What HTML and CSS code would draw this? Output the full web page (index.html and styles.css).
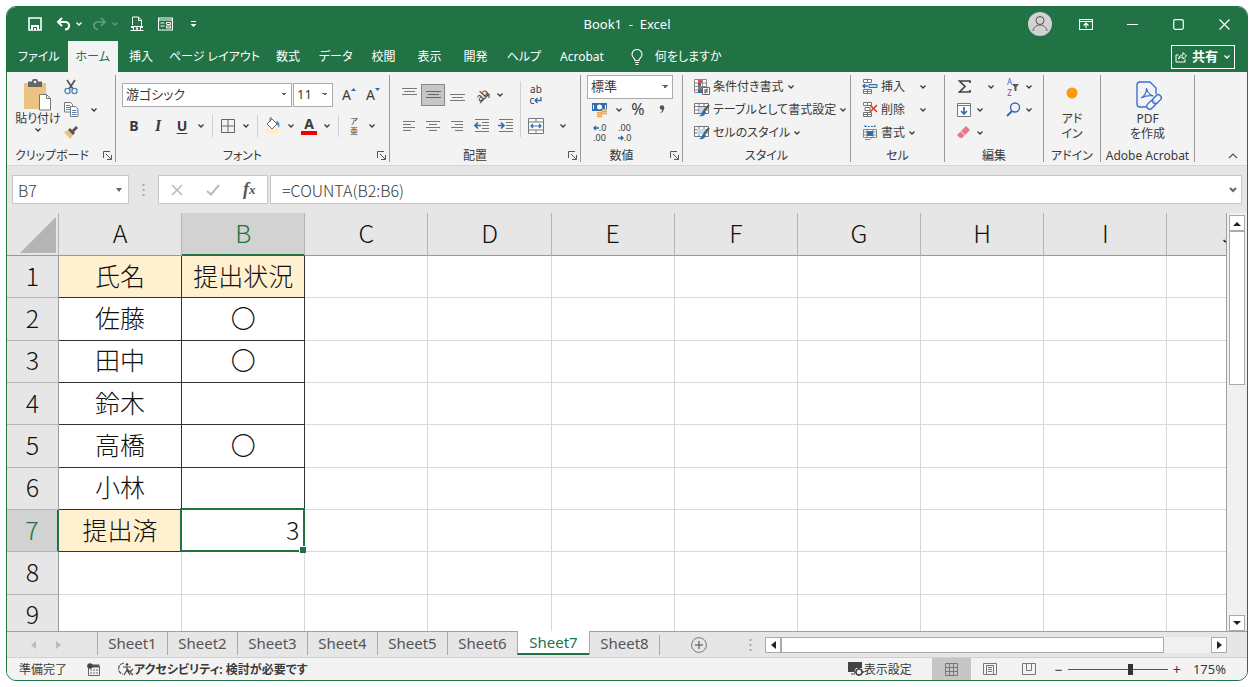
FILE: index.html
```html
<!DOCTYPE html>
<html lang="ja">
<head>
    <meta charset="UTF-8">
    <meta name="viewport" content="width=device-width, initial-scale=1.0">
    <title>Book1 - Excel</title>
    <link rel="stylesheet" href="styles.css">
</head>
<body>
    <svg class="defs" aria-hidden="true">
        <symbol id="chev" viewBox="0 0 8 8"><path d="M1.5 2.5 4 5 6.5 2.5" fill="none" stroke="currentColor" stroke-width="1.3"/></symbol>
        <symbol id="launch" viewBox="0 0 9 9"><path d="M.5 7V.5H7M3 3l5 5M8.5 4v4.5H4" fill="none" stroke="#555"/></symbol>
        <symbol id="minitable" viewBox="0 0 16 16"><path d="M.5 1.5h14v10H.5zM.5 4.5h14M.5 8h14M5 1.5v10M10 1.5v10" fill="#fff" stroke="#777"/></symbol>
    </svg>
    <div class="window">
        <header class="titlebar">
            <div class="quick">
                <button aria-label="上書き保存"><svg width="14" height="14" viewBox="0 0 14 14"><path d="M1 1h12v12H1z" fill="none" stroke="#fff" stroke-width="1.6"/><path d="M3 8h8v5H3z" fill="#fff"/><path d="M5 10h4v3H8v-2H6v2H5z" fill="#217346"/></svg></button>
                <button aria-label="元に戻す"><svg width="15" height="14" viewBox="0 0 15 14"><path d="M6 1 2 5l4 4M2 5h7c6 0 5 7 0 7.5" fill="none" stroke="#fff" stroke-width="2"/></svg></button>
                <svg class="chev" width="8" height="8"><use href="#chev"/></svg>
                <button class="dim" aria-label="やり直し"><svg width="15" height="14" viewBox="0 0 15 14"><path d="M9 1l4 4-4 4M13 5H6C0 5 1 12 6 12.5" fill="none" stroke="#fff" stroke-width="1.7"/></svg></button>
                <svg class="chev dim" width="8" height="8"><use href="#chev"/></svg>
                <button class="gap" aria-label="印刷プレビュー"><svg width="14" height="16" viewBox="0 0 14 16"><path d="M2.5 9V1h6l3 3v6M8.500 1v3.500h3" fill="none" stroke="#fff"/><path d="M1 10h12v2H1z" fill="#fff"/><path d="M3.500 10.500h7v4h-7z" fill="#217346" stroke="#fff"/><circle cx="7" cy="12.500" r="1.200" fill="#fff"/><path d="M.5 14.500h13" stroke="#fff"/></svg></button>
                <button class="gap" aria-label="フォーム"><svg width="15" height="14" viewBox="0 0 15 14"><path d="M.5 1h14v12H.5zM.5 3h14M2.500 6h4M2.500 9h4" fill="none" stroke="#fff" stroke-width="1.2"/><path d="M8.500 5.500h4v2h-4zM8.500 9h4v2h-4z" fill="none" stroke="#fff"/></svg></button>
                <button class="gap" aria-label="カスタマイズ"><svg width="7" height="8" viewBox="0 0 7 8"><path d="M1 1.500h5" stroke="#fff"/><path d="M.5 4h6l-3 3z" fill="#fff"/></svg></button>
            </div>
            <div class="title">Book1&nbsp; -&nbsp; Excel</div>
            <div class="controls">
                <button class="avatar" aria-label="アカウント"><svg width="24" height="24" viewBox="0 0 24 24"><circle cx="12" cy="12" r="12" fill="#d2d2d2"/><circle cx="12" cy="8.5" r="4" fill="none" stroke="#555"/><path d="M5 19c1-8 13-8 14 0" fill="none" stroke="#555"/></svg></button>
                <button aria-label="リボンの表示オプション"><svg width="14" height="11" viewBox="0 0 14 11"><path d="M.5.5h13v10H.5zM.5 2.500h13M7 9V4.500M4.500 6.500 7 4l2.500 2.500" fill="none" stroke="#fff" stroke-width="1.2"/></svg></button>
                <button aria-label="最小化"><svg width="11" height="11" viewBox="0 0 11 11"><path d="M0 5.500h11" stroke="#fff" stroke-width="1.2"/></svg></button>
                <button aria-label="最大化"><svg width="11" height="11" viewBox="0 0 11 11"><rect x=".7" y=".7" width="9.6" height="9.6" rx="1.5" fill="none" stroke="#fff" stroke-width="1.2"/></svg></button>
                <button aria-label="閉じる"><svg width="11" height="11" viewBox="0 0 11 11"><path d="M.5.5l10 10M10.500.5l-10 10" stroke="#fff" stroke-width="1.2"/></svg></button>
            </div>
        </header>

        <nav class="menu">
            <button class="kana">ファイル</button>
            <button class="kana active">ホーム</button>
            <button>挿入</button>
            <button class="long">ページ レイアウト</button>
            <button>数式</button>
            <button class="kana">データ</button>
            <button>校閲</button>
            <button>表示</button>
            <button>開発</button>
            <button class="kana">ヘルプ</button>
            <button>Acrobat</button>
            <button class="tell"><svg width="12" height="16" viewBox="0 0 12 16"><path d="M4 11.500C4 9 1 8.500 1 5.500a5 5 0 0 1 10 0c0 3-3 3.500-3 6zM4 13.500h4M4.500 15.500h3" fill="none" stroke="#fff" stroke-width="1.1"/></svg>何をしますか</button>
            <button class="share"><svg width="12" height="12" viewBox="0 0 12 12"><path d="M3.500 4H1v7h9V8M3.500 8C4 5 6 4 8 4V1.500L11.500 5 8 8V6C6 6 4.500 6.500 3.500 8z" fill="none" stroke="#fff"/></svg><b>共有</b><svg width="8" height="8"><use href="#chev"/></svg></button>
        </nav>

        <section class="ribbon">
            <div class="group clipboard">
                <div class="body">
                    <button class="big"><svg width="30" height="32" viewBox="0 0 30 32"><path d="M1 4h22v26H1z" fill="#eac282"/><path d="M5 2.500h4a3 3 0 0 1 6 0h4V8H5z" fill="#666"/><circle cx="12" cy="3" r="1.3" fill="#f3f3f3"/><path d="M16.500 15.500h7l4 4V31h-11z" fill="#fff" stroke="#777"/><path d="M23.500 15.500v4h4" fill="none" stroke="#777"/></svg>貼り付け<svg width="8" height="8"><use href="#chev"/></svg></button>
                    <div class="rows">
                        <div class="row"><button class="ib" aria-label="切り取り"><svg width="14" height="16" viewBox="0 0 14 16"><path d="M3 1l6 9M11 1 5 10" stroke="#555" stroke-width="1.7"/><circle cx="3.5" cy="12" r="2.6" fill="none" stroke="#4f81bd" stroke-width="1.3"/><circle cx="10.5" cy="12" r="2.6" fill="none" stroke="#4f81bd" stroke-width="1.3"/></svg></button></div>
                        <div class="row"><button class="ib" aria-label="コピー"><svg width="15" height="15" viewBox="0 0 15 15"><path d="M.5.5h6L8.500 2.500V10H.5z" fill="#fff" stroke="#777"/><path d="M2 3.500h4M2 5.500h4M2 7.500h4" stroke="#4f81bd"/><path d="M6.500 4.500h5l2.500 2.500v7.500H6.500z" fill="#fff" stroke="#777"/><path d="M8 8.500h4.500M8 10.500h4.500M8 12.500h4.500" stroke="#4f81bd"/></svg></button><svg class="far" width="8" height="8"><use href="#chev"/></svg></div>
                        <div class="row"><button class="ib" aria-label="書式のコピー"><svg width="14" height="13" viewBox="0 0 14 13"><path d="M0 6l4-2 5 5-3 4z" fill="#eac282"/><path d="M4 4l2-2 5 5-2 2zM8 4l4-4 2 2-4 4z" fill="#555"/></svg></button></div>
                    </div>
                </div>
                <div class="label">クリップボード<button aria-label="クリップボードの詳細"><svg width="9" height="9"><use href="#launch"/></svg></button></div>
            </div>

            <div class="group font">
                <div class="body two">
                    <div class="row">
                        <select class="family" aria-label="フォント名"><option>游ゴシック</option></select>
                        <select class="size" aria-label="フォント サイズ"><option>11</option></select>
                        <button class="ib" aria-label="拡大"><span class="grow">A</span><svg width="5" height="14" viewBox="0 0 5 14"><path d="M0 3 2.500 0 5 3z" fill="#2b6cb0"/></svg></button>
                        <button class="ib" aria-label="縮小"><span class="grow">A</span><svg width="5" height="14" viewBox="0 0 5 14"><path d="M0 0h5L2.500 3z" fill="#2b6cb0"/></svg></button>
                    </div>
                    <div class="row">
                        <button class="ib"><b>B</b></button>
                        <button class="ib"><b class="ital">I</b></button>
                        <button class="ib"><b class="und">U</b></button>
                        <svg class="cv" width="8" height="8"><use href="#chev"/></svg>
                        <i class="sep"></i>
                        <button class="ib" aria-label="罫線"><svg width="14" height="14" viewBox="0 0 14 14"><path d="M.5.5h13v13H.5zM7 .5v13M.5 7h13" fill="none" stroke="#666"/></svg></button>
                        <svg class="cv" width="8" height="8"><use href="#chev"/></svg>
                        <i class="sep"></i>
                        <button class="ib" aria-label="塗りつぶし"><svg width="16" height="17" viewBox="0 0 16 17"><path d="M1 12h13v4H1z" fill="#fdeeb8"/><path d="M2 7l5-5 5 5-5 5zM5 5V1h2" fill="#fff" stroke="#666"/><path d="M11 4c3 0 4 3 3 7l-2-4z" fill="#4f81bd"/></svg></button>
                        <svg class="cv" width="8" height="8"><use href="#chev"/></svg>
                        <button class="ib fc"><b>A</b></button>
                        <svg class="cv" width="8" height="8"><use href="#chev"/></svg>
                        <i class="sep"></i>
                        <button class="ib ruby"><span>ア</span><span>亜</span></button>
                        <svg class="cv" width="8" height="8"><use href="#chev"/></svg>
                    </div>
                </div>
                <div class="label">フォント<button aria-label="フォントの詳細"><svg width="9" height="9"><use href="#launch"/></svg></button></div>
            </div>

            <div class="group align">
                <div class="body">
                    <div class="two">
                        <div class="row">
                            <button class="ib" aria-label="上揃え"><svg width="15" height="16" viewBox="0 0 15 16"><path d="M0 1.500h15M2 4.500h11M0 7.500h15" stroke="#777"/></svg></button>
                            <button class="ib on" aria-label="上下中央揃え"><svg width="15" height="16" viewBox="0 0 15 16"><path d="M0 4.500h15M2 7.500h11M0 10.500h15" stroke="#666"/></svg></button>
                            <button class="ib" aria-label="下揃え"><svg width="15" height="16" viewBox="0 0 15 16"><path d="M0 7.500h15M2 10.500h11M0 13.500h15" stroke="#777"/></svg></button>
                            <button class="ib orient" aria-label="方向"><span>ab</span><svg width="15" height="15" viewBox="0 0 15 15"><path d="M4 14 13 5M9 5h4v4" fill="none" stroke="#555" stroke-width="1.2"/></svg></button>
                            <svg class="cv" width="8" height="8"><use href="#chev"/></svg>
                        </div>
                        <div class="row">
                            <button class="ib" aria-label="左揃え"><svg width="12" height="10" viewBox="0 0 12 10"><path d="M0 .5h12M0 3.500h8M0 6.500h12M0 9.500h8" stroke="#777"/></svg></button>
                            <button class="ib" aria-label="中央揃え"><svg width="14" height="10" viewBox="0 0 14 10"><path d="M0 .5h14M3 3.500h8M0 6.500h14M3 9.500h8" stroke="#777"/></svg></button>
                            <button class="ib" aria-label="右揃え"><svg width="12" height="10" viewBox="0 0 12 10"><path d="M0 .5h12M4 3.500h8M0 6.500h12M4 9.500h8" stroke="#777"/></svg></button>
                            <button class="ib" aria-label="インデントを減らす"><svg width="15" height="13" viewBox="0 0 15 13"><path d="M1 .5h14M8 3.500h7M8 6.500h7M8 9.500h7M1 12.500h14" stroke="#777"/><path d="M7 6.500H1M4 3.500l-3 3 3 3" fill="none" stroke="#2b6cb0" stroke-width="1.7"/></svg></button>
                            <button class="ib" aria-label="インデントを増やす"><svg width="15" height="13" viewBox="0 0 15 13"><path d="M1 .5h14M8 3.500h7M8 6.500h7M8 9.500h7M1 12.500h14" stroke="#777"/><path d="M0 6.500h6M3 3.500l3 3-3 3" fill="none" stroke="#2b6cb0" stroke-width="1.7"/></svg></button>
                        </div>
                    </div>
                    <i class="sep tall"></i>
                    <div class="two">
                        <div class="row"><button class="ib wrap" aria-label="折り返して全体を表示する"><span>ab</span><span>c<svg width="8" height="7" viewBox="0 0 8 7"><path d="M7 0v3.500H1M3.500 1 1 3.500 3.500 6" fill="none" stroke="#2b6cb0" stroke-width="1.3"/></svg></span></button></div>
                        <div class="row"><button class="ib" aria-label="セルを結合して中央揃え"><svg width="16" height="16" viewBox="0 0 16 16"><path d="M.5.5h15v15H.5zM.5 4h15M.5 12h15M8 .5V4M8 12v3.500" fill="#fff" stroke="#777"/><path d="M3 8h10M5 6 3 8l2 2M11 6l2 2-2 2" fill="none" stroke="#2b6cb0" stroke-width="1.2"/></svg></button><svg class="far" width="8" height="8"><use href="#chev"/></svg></div>
                    </div>
                </div>
                <div class="label">配置<button aria-label="配置の詳細"><svg width="9" height="9"><use href="#launch"/></svg></button></div>
            </div>

            <div class="group number">
                <div class="body three">
                    <div class="row"><select aria-label="数値の書式"><option>標準</option></select></div>
                    <div class="row">
                        <button class="ib" aria-label="通貨"><svg width="16" height="16" viewBox="0 0 16 16"><path d="M0 1h15v8H0z" fill="#2f6db5"/><circle cx="7.5" cy="5" r="2.5" fill="#fff"/><path d="M1.500 3v4M13.500 3v4" stroke="#fff"/><path d="M5 9h6v6H5zM10 7h5v7h-5z" fill="#f3f3f3"/><path d="M5 10.500h5M5 12.500h5M5 14.500h5M10 7.500h5M10 9.500h5M10 11.500h5" stroke="#eda43e" stroke-width="1.3"/></svg></button>
                        <svg class="cv" width="8" height="8"><use href="#chev"/></svg>
                        <button class="ib pct">%</button>
                        <button class="ib comma" aria-label="桁区切り"><svg width="6" height="9" viewBox="0 0 6 9"><circle cx="3" cy="2.5" r="2.3" fill="#555"/><path d="M5.300 2.500C5 6 3 8 1 8.500 3 6.500 3.500 5 3 3z" fill="#555"/></svg></button>
                    </div>
                    <div class="row">
                        <button class="ib dec"><span><svg width="6" height="6" viewBox="0 0 6 6"><path d="M6 3H1M3 1 1 3l2 2" fill="none" stroke="#2b6cb0" stroke-width="1.4"/></svg>.0</span><span>.00</span></button>
                        <button class="ib dec"><span>.00</span><span><svg width="6" height="6" viewBox="0 0 6 6"><path d="M0 3h5M3 1l2 2-2 2" fill="none" stroke="#2b6cb0" stroke-width="1.4"/></svg>.0</span></button>
                    </div>
                </div>
                <div class="label">数値<button aria-label="数値の詳細"><svg width="9" height="9"><use href="#launch"/></svg></button></div>
            </div>

            <div class="group style">
                <div class="body three">
                    <button class="row"><svg width="16" height="16" viewBox="0 0 16 16"><path d="M.5.5h12v13H.5zM.5 4h12M.5 7.500h12M.5 11h12M8.500.5v13" fill="#fff" stroke="#888"/><path d="M4 1h4v3H4zM4 8h4v3H4z" fill="#d9534f"/><path d="M4 4h3v3H4zM4 11h5v3H4z" fill="#2f6db5"/><path d="M8.500 8.500h7v7h-7z" fill="#fff" stroke="#666"/><path d="M10 11h4M10 13h4M13 9.500l-2 5" stroke="#555"/></svg>条件付き書式<svg width="8" height="8"><use href="#chev"/></svg></button>
                    <button class="row"><svg width="16" height="16" viewBox="0 0 16 16"><use href="#minitable"/><path d="M5 5h5v6H5z" fill="#c5d9ee"/><path d="M15 3 10 9" stroke="#555" stroke-width="2"/><path d="M10 8l2 2c-1 4-4 5-7 4 3-1 2-4 5-6z" fill="#2f6db5"/></svg>テーブルとして書式設定<svg width="8" height="8"><use href="#chev"/></svg></button>
                    <button class="row"><svg width="16" height="16" viewBox="0 0 16 16"><use href="#minitable"/><path d="M3 4h9v5H3z" fill="#c5d9ee"/><path d="M15 3 10 9" stroke="#555" stroke-width="2"/><path d="M10 8l2 2c-1 4-4 5-7 4 3-1 2-4 5-6z" fill="#2f6db5"/></svg>セルのスタイル<svg width="8" height="8"><use href="#chev"/></svg></button>
                </div>
                <div class="label">スタイル</div>
            </div>

            <div class="group cells">
                <div class="body three">
                    <button class="row"><svg width="16" height="16" viewBox="0 0 16 16"><path d="M1.500.5h8v3h-8zM5.500.5v3M1.500 10.500h8v4h-8zM5.500 10.500v4M1.500 12.500h8" fill="#fff" stroke="#777"/><path d="M7 5.500h8v3H7z" fill="#c5d9ee" stroke="#2f6db5"/><path d="M6 7H1M3 5 1 7l2 2" fill="none" stroke="#2f6db5" stroke-width="1.3"/></svg>挿入<svg class="far" width="8" height="8"><use href="#chev"/></svg></button>
                    <button class="row"><svg width="16" height="16" viewBox="0 0 16 16"><path d="M1.500.5h8v3h-8zM5.500.5v3M1.500 10.500h8v4h-8zM5.500 10.500v4M1.500 12.500h8M3 5.500h5v3H3z" fill="#fff" stroke="#777"/><path d="M8 3l7 7M15 3l-7 7" stroke="#d9412b" stroke-width="1.7"/></svg>削除<svg class="far" width="8" height="8"><use href="#chev"/></svg></button>
                    <button class="row"><svg width="16" height="16" viewBox="0 0 16 16"><path d="M3 1.500h10M3 0v3M13 0v3" stroke="#2f6db5" stroke-dasharray="2 1"/><path d="M1.500 4.500h13v8h-13zM1.500 7h13M1.500 10h13M5 4.500v8M11 4.500v8M3 14.500h5l2-2" fill="#fff" stroke="#888"/><path d="M5 6h6v5H5z" fill="#2f6db5"/></svg>書式<svg width="8" height="8"><use href="#chev"/></svg></button>
                </div>
                <div class="label">セル</div>
            </div>

            <div class="group edit">
                <div class="body">
                    <div class="three">
                        <div class="row"><button class="ib" aria-label="オート SUM"><svg width="13" height="13" viewBox="0 0 13 13"><path d="M12 3V1H1.500L7 6.500 1.500 12H12v-2" fill="none" stroke="#444" stroke-width="1.7"/></svg></button><svg class="far" width="8" height="8"><use href="#chev"/></svg></div>
                        <div class="row"><button class="ib" aria-label="フィル"><svg width="14" height="14" viewBox="0 0 14 14"><path d="M.5.5h13v13H.5zM.5 2.500h13" fill="#fff" stroke="#777"/><path d="M7 4v7M4 8l3 3 3-3" fill="none" stroke="#2f6db5" stroke-width="1.7"/></svg></button><svg class="cv" width="8" height="8"><use href="#chev"/></svg></div>
                        <div class="row"><button class="ib" aria-label="クリア"><svg width="14" height="13" viewBox="0 0 14 13"><path d="M9 0l4 4-5 5-4-4z" fill="#e8798c"/><path d="M3.500 5.500l4 4L5 12H3L0 9z" fill="#e8798c"/></svg></button><svg class="cv" width="8" height="8"><use href="#chev"/></svg></div>
                    </div>
                    <div class="three">
                        <div class="row"><button class="ib sort" aria-label="並べ替えとフィルター"><span class="az"><span class="a">A</span><span class="z">Z</span></span><svg width="7" height="8" viewBox="0 0 7 8"><path d="M0 1h7L4.500 4v4h-2V4z" fill="#555"/></svg></button><svg class="cv" width="8" height="8"><use href="#chev"/></svg></div>
                        <div class="row"><button class="ib" aria-label="検索と選択"><svg width="15" height="15" viewBox="0 0 15 15"><circle cx="9" cy="5.5" r="4.5" fill="none" stroke="#2f6db5" stroke-width="1.4"/><path d="M6 9l-5 5" stroke="#2f6db5" stroke-width="2"/></svg></button><svg class="cv" width="8" height="8"><use href="#chev"/></svg></div>
                    </div>
                </div>
                <div class="label">編集</div>
            </div>

            <div class="group addin">
                <div class="body"><button class="big"><svg width="30" height="32" viewBox="0 0 30 32"><circle cx="15" cy="14" r="5.5" fill="#ff9a0c"/></svg><span>アド</span><span>イン</span></button></div>
                <div class="label">アドイン</div>
            </div>

            <div class="group adobe">
                <div class="body"><button class="big"><svg width="30" height="32" viewBox="0 0 30 32"><path d="M13 28H7a3 3 0 0 1-3-3V6a3 3 0 0 1 3-3h10l6 6v6" fill="none" stroke="#3b6fd4" stroke-width="1.4"/><path d="M8 19c3-1 6-6 5.500-10 1 5 3 7 7 8-5-1-8 0-12.500 2z" fill="none" stroke="#3b6fd4" stroke-width="1.2"/><g fill="#f3f3f3" fill-opacity=".7" stroke="#3b6fd4" stroke-width="1.4" transform="rotate(-45 21 23)"><rect x="12" y="20" width="10" height="6" rx="3"/><rect x="20" y="20" width="10" height="6" rx="3"/></g></svg><span>PDF</span><span>を作成</span></button></div>
                <div class="label">Adobe Acrobat</div>
            </div>
            <button class="collapse" aria-label="リボンを折りたたむ"><svg width="10" height="6" viewBox="0 0 10 6"><path d="M1 5l4-4 4 4" fill="none" stroke="#555" stroke-width="1.2"/></svg></button>
        </section>

        <section class="formulabar">
            <div class="namebox"><input type="text" value="B7" aria-label="名前ボックス"><svg width="6" height="4" viewBox="0 0 6 4"><path d="M0 0h6L3 4z" fill="#666"/></svg></div>
            <svg class="grip" width="3" height="12" viewBox="0 0 3 12"><path d="M1.500 0v12" stroke="#aaa" stroke-width="2" stroke-dasharray="2 3"/></svg>
            <div class="fxbox">
                <button aria-label="キャンセル"><svg width="12" height="12" viewBox="0 0 12 12"><path d="M1 1l10 10M11 1 1 11" stroke="#bbb" stroke-width="1.6"/></svg></button>
                <button aria-label="入力"><svg width="14" height="12" viewBox="0 0 14 12"><path d="M1 7l4 3.500L13 1" fill="none" stroke="#bbb" stroke-width="2"/></svg></button>
                <button class="fx">f<small>x</small></button>
            </div>
            <div class="formula"><input type="text" value="=COUNTA(B2:B6)" aria-label="数式バー"><svg width="8" height="6" viewBox="0 0 8 6"><path d="M1 1l3 3 3-3" fill="none" stroke="#666" stroke-width="2"/></svg></div>
        </section>

        <main class="sheet">
            <div class="viewport">
                <table>
                    <thead>
                        <tr>
                            <th class="corner"><svg width="36" height="36" viewBox="0 0 36 36"><path d="M36 0v36H0z" fill="#b4b4b4"/></svg></th>
                            <th>A</th><th class="sel">B</th><th>C</th><th>D</th><th>E</th><th>F</th><th>G</th><th>H</th><th>I</th><th>J</th>
                        </tr>
                    </thead>
                    <tbody>
                        <tr><th>1</th><td class="box head">氏名</td><td class="box head">提出状況</td><td></td><td></td><td></td><td></td><td></td><td></td><td></td><td></td></tr>
                        <tr><th>2</th><td class="box">佐藤</td><td class="box">〇</td><td></td><td></td><td></td><td></td><td></td><td></td><td></td><td></td></tr>
                        <tr><th>3</th><td class="box">田中</td><td class="box">〇</td><td></td><td></td><td></td><td></td><td></td><td></td><td></td><td></td></tr>
                        <tr><th>4</th><td class="box">鈴木</td><td class="box"></td><td></td><td></td><td></td><td></td><td></td><td></td><td></td><td></td></tr>
                        <tr><th>5</th><td class="box">高橋</td><td class="box">〇</td><td></td><td></td><td></td><td></td><td></td><td></td><td></td><td></td></tr>
                        <tr><th>6</th><td class="box">小林</td><td class="box"></td><td></td><td></td><td></td><td></td><td></td><td></td><td></td><td></td></tr>
                        <tr><th class="sel">7</th><td class="box head">提出済</td><td class="box current">3</td><td></td><td></td><td></td><td></td><td></td><td></td><td></td><td></td></tr>
                        <tr><th>8</th><td></td><td></td><td></td><td></td><td></td><td></td><td></td><td></td><td></td><td></td></tr>
                        <tr><th>9</th><td></td><td></td><td></td><td></td><td></td><td></td><td></td><td></td><td></td><td></td></tr>
                    </tbody>
                </table>
            </div>
            <div class="vscroll">
                <button aria-label="上へ"><svg width="8" height="5" viewBox="0 0 8 5"><path d="M0 5l4-4 4 4z" fill="#222"/></svg></button>
                <div class="thumb"></div>
                <button class="end" aria-label="下へ"><svg width="8" height="5" viewBox="0 0 8 5"><path d="M0 0h8L4 4z" fill="#222"/></svg></button>
            </div>
        </main>

        <nav class="tabs">
            <div class="arrows">
                <button aria-label="前のシート"><svg width="5" height="8" viewBox="0 0 5 8"><path d="M5 0v8L0 4z" fill="#bbb"/></svg></button>
                <button aria-label="次のシート"><svg width="5" height="8" viewBox="0 0 5 8"><path d="M0 0v8l5-4z" fill="#bbb"/></svg></button>
            </div>
            <button class="tab">Sheet1</button>
            <button class="tab">Sheet2</button>
            <button class="tab">Sheet3</button>
            <button class="tab">Sheet4</button>
            <button class="tab">Sheet5</button>
            <button class="tab">Sheet6</button>
            <button class="tab active">Sheet7</button>
            <button class="tab">Sheet8</button>
            <button class="add" aria-label="新しいシート"><svg width="16" height="16" viewBox="0 0 16 16"><circle cx="8" cy="8" r="7.4" fill="none" stroke="#777"/><path d="M8 4v8M4 8h8" stroke="#777" stroke-width="1.5"/></svg></button>
            <svg class="grip" width="3" height="12" viewBox="0 0 3 12"><path d="M1.500 0v12" stroke="#aaa" stroke-width="2" stroke-dasharray="2 3"/></svg>
            <div class="hscroll">
                <button aria-label="左へ"><svg width="5" height="8" viewBox="0 0 5 8"><path d="M5 0v8L0 4z" fill="#222"/></svg></button>
                <div class="thumb"></div>
                <button class="end" aria-label="右へ"><svg width="5" height="8" viewBox="0 0 5 8"><path d="M0 0v8l5-4z" fill="#222"/></svg></button>
            </div>
        </nav>

        <footer class="status">
            <span>準備完了</span>
            <svg class="macro" width="13" height="13" viewBox="0 0 13 13"><path d="M1.500 3.500h11v9h-11zM3 7h2M6 7h2M9 7h2M3 10h2M6 10h2M9 10h2" fill="none" stroke="#666"/><path d="M4 1.500h8.500v3H4z" fill="#555"/><circle cx="3" cy="3" r="2.8" fill="#444"/></svg>
            <button class="access"><svg width="16" height="14" viewBox="0 0 16 14"><path d="M6 1C-1 2-1 11 5 12" fill="none" stroke="#555" stroke-width="1.2" stroke-dasharray="4 1"/><path d="M5 5h8M9 5v3l-3 5M9 8l3 5M9 7l6 6M15 7l-3 3" fill="none" stroke="#444" stroke-width="1.2"/><circle cx="9" cy="2.5" r="1.3" fill="#444"/></svg><b>アクセシビリティ: 検討が必要です</b></button>
            <button class="display"><svg width="16" height="14" viewBox="0 0 16 14"><path d="M0 0h14v6H8l-2 4H0z" fill="#444"/><circle cx="11" cy="10" r="3" fill="#f3f3f3" stroke="#444" stroke-width="1.6"/><path d="M11 5v2M11 13v1M6 10h2M14 10h2" stroke="#444" stroke-width="1.5"/><path d="M3 12h4" stroke="#444"/></svg>表示設定</button>
            <div class="views">
                <button class="on" aria-label="標準"><svg width="13" height="13" viewBox="0 0 13 13"><path d="M.5.5h12v12H.5zM.5 4.500h12M.5 8.500h12M4.500.5v12M8.500.5v12" fill="none" stroke="#777"/></svg></button>
                <button aria-label="ページ レイアウト"><svg width="14" height="12" viewBox="0 0 14 12"><path d="M.5.5h13v11H.5zM3.500 2.500h7v9h-7zM5 4.500h4M5 6.500h4M5 8.500h4" fill="none" stroke="#777"/></svg></button>
                <button aria-label="改ページ プレビュー"><svg width="14" height="12" viewBox="0 0 14 12"><path d="M.5.5h13v11H.5zM4.500.5v7h5v-7" fill="none" stroke="#777"/></svg></button>
            </div>
            <label class="zoom"><span>−</span><input type="range" min="10" max="220" value="142" aria-label="ズーム"><span>+</span></label>
            <span class="percent">175%</span>
        </footer>
    </div>
</body>
</html>
```
FILE: styles.css
```css
* {
    box-sizing: border-box;
}
body {
    margin: 0;
    padding: 6px 7px 7px 6px;
    background-color: #fff;
    color: #3a3a3a;
    font-family: "Noto Sans", "Noto Sans CJK JP", sans-serif;
    font-size: 12px;
    line-height: 15px;
    font-feature-settings: "palt";
}
button, input, select {
    margin: 0;
    padding: 0;
    border: 0;
    background: none;
    color: inherit;
    font: inherit;
    font-feature-settings: inherit;
}
button {
    display: flex;
    align-items: center;
    justify-content: center;
    white-space: nowrap;
}
svg {
    flex: none;
}
.defs {
    position: absolute;
    width: 0;
    height: 0;
}
.window {
    border: 1px solid #217346;
    border-radius: 10px;
    overflow: hidden;
    background-color: #e6e6e6;
}

/* title bar */
.titlebar {
    display: grid;
    grid-template-columns: 1fr auto 1fr;
    align-items: center;
    height: 34px;
    background-color: #217346;
    color: #fff;
}
.quick {
    display: flex;
    align-items: center;
    padding-left: 20px;
    gap: 4px;
}
.quick button {
    width: 16px;
    height: 20px;
}
.quick button + button, .quick .gap {
    margin-left: 8px;
}
.quick .chev + .dim {
    margin-left: 4px;
}
.quick .chev + .gap {
    margin-left: 6px;
}
.dim {
    opacity: 0.3;
}
.title {
    font-size: 13px;
}
.controls {
    display: flex;
    justify-content: flex-end;
}
.controls button {
    width: 46px;
    height: 30px;
}

/* menu */
.menu {
    display: flex;
    height: 31px;
    padding-left: 3px;
    background-color: #217346;
    color: #fff;
}
.menu button {
    padding: 0 11px;
}
.menu .kana {
    padding: 0 8px;
}
.menu .long {
    padding: 0 5px;
}
.menu .active {
    background-color: #f3f3f3;
    color: #217346;
}
.menu .tell {
    gap: 12px;
    padding-left: 16px;
}
.menu .share {
    align-self: center;
    gap: 5px;
    height: 24px;
    margin-left: auto;
    margin-right: 12px;
    padding: 0 3px;
    border: 1px solid #fff;
    font-size: 13px;
}

/* ribbon */
.ribbon {
    display: flex;
    height: 94px;
    padding: 3px 0;
    background-color: #f3f3f3;
    border-bottom: 1px solid #d6d6d6;
}
.group {
    display: flex;
    flex-direction: column;
    border-right: 1px solid #999;
}
.clipboard { width: 109px; }
.font { width: 274px; }
.align { width: 191px; }
.number { width: 102px; }
.style { width: 168px; }
.cells { width: 94px; }
.edit { width: 99px; }
.addin { width: 57px; }
.adobe { width: 94px; }
.body {
    display: flex;
    flex: 1;
}
.label {
    position: relative;
    height: 14px;
    line-height: 16px;
    text-align: center;
    white-space: nowrap;
}
.label button {
    position: absolute;
    right: 3px;
    top: 3px;
}
.clipboard .label {
    padding-right: 18px;
}
.font .label, .align .label, .number .label {
    padding-right: 20px;
}
.row {
    display: flex;
    align-items: center;
    justify-content: flex-start;
    height: 23px;
}
.two {
    padding-top: 4px;
}
.two .row {
    height: 31px;
}
.body.two, .body.three {
    flex-direction: column;
}
.ib {
    width: 24px;
    height: 22px;
    font-size: 14px;
}
.cv {
    margin: 0 3px;
}
.far {
    margin-left: 11px;
}
.sep {
    width: 1px;
    height: 22px;
    margin: 0 4px;
    background-color: #d0d0d0;
}
.sep ~ .ib {
    width: 22px;
}
.big {
    flex-direction: column;
    justify-content: flex-start;
    width: 100%;
    padding-top: 4px;
}
.clipboard .big {
    width: 50px;
    margin-left: 6px;
}
.clipboard .ib {
    width: 16px;
}
select {
    height: 24px;
    padding-left: 3px;
    border: 1px solid #ababab;
    background-color: #fff;
    background-image: linear-gradient(45deg, transparent 50%, #666 50%), linear-gradient(-45deg, transparent 50%, #666 50%);
    background-position: right 7px center, right 4px center;
    background-size: 3px 3px;
    background-repeat: no-repeat;
    appearance: none;
    font-size: 13px;
}
.font .body {
    padding-left: 6px;
}
.family { width: 170px; }
.size {
    width: 40px;
    margin: 0 4px 0 1px;
}
.grow {
    font-size: 14px;
}
.ital {
    font-family: "Liberation Serif", serif;
    font-style: italic;
    font-size: 16px;
}
.und {
    text-decoration: underline;
    text-underline-offset: 2px;
}
.fc b {
    width: 16px;
    border-bottom: 4px solid #f00000;
    line-height: 14px;
}
.ruby, .wrap, .dec {
    flex-direction: column;
}
.ruby span {
    font-size: 8px;
    line-height: 10px;
}
.align .body {
    padding-left: 7px;
}
.align .two:first-child {
    width: 120px;
}
.on {
    background-color: #c6c6c6;
}
.ib.on {
    border: 1px solid #888;
}
.tall {
    height: 56px;
    margin: 6px 3px 0;
}
.orient {
    position: relative;
}
.orient span {
    transform: rotate(-45deg);
    font-size: 11px;
}
.orient svg {
    position: absolute;
    left: 7px;
    top: 5px;
}
.wrap span {
    font-size: 10px;
    line-height: 11px;
}
.number .body {
    padding-left: 6px;
}
.number select {
    width: 86px;
}
.pct {
    font-size: 16px;
}
.dec span {
    font-size: 9px;
    line-height: 10px;
}
.number .row:last-child .ib, .number .row .ib:first-child {
    width: 25px;
}
.style .body, .cells .body {
    padding-left: 11px;
}
.style .row, .cells .row {
    gap: 3px;
}
.edit .body {
    gap: 14px;
    padding-left: 7px;
}
.edit .three + .three {
    margin-left: -8px;
}
.edit .cv {
    margin: 0;
}
.az {
    display: flex;
    flex-direction: column;
    font-size: 8px;
    line-height: 11px;
}
.a { color: #2f6db5; }
.z { color: #8e44ad; }
.collapse {
    align-self: flex-end;
    width: 12px;
    height: 12px;
    margin-left: auto;
    margin-right: 8px;
}

/* formula bar */
.formulabar {
    display: flex;
    align-items: center;
    height: 47px;
    padding: 0 5px;
}
.namebox, .fxbox, .formula {
    display: flex;
    align-items: center;
    height: 29px;
    border: 1px solid #c8c8c8;
    background-color: #fff;
}
.formulabar input {
    flex: 1;
    width: 100%;
    min-width: 0;
    font-family: "Noto Sans CJK JP", sans-serif;
    font-weight: 300;
    font-size: 16px;
}
.namebox {
    width: 117px;
    padding: 0 6px 0 5px;
}
.formulabar .grip {
    margin: 0 13px;
}
.fxbox {
    justify-content: space-around;
    width: 110px;
}
.fx {
    font-family: "Liberation Serif", serif;
    font-style: italic;
    font-weight: bold;
    font-size: 18px;
    color: #555;
}
.fx small {
    font-size: 13px;
}
.formula {
    flex: 1;
    margin-left: 2px;
    padding: 0 4px 0 11px;
}

/* worksheet */
.sheet {
    display: flex;
    height: 419px;
    border-bottom: 1px solid #a0a0a0;
}
.viewport {
    flex: 1;
    overflow: hidden;
    border-right: 1px solid #a0a0a0;
}
table {
    width: 105.3%;
    height: 424px;
    table-layout: fixed;
    border-collapse: separate;
    border-spacing: 0;
    font-family: "Noto Sans CJK JP", sans-serif;
    font-weight: 300;
    font-size: 25px;
    line-height: 36px;
    color: #111;
}
th, td {
    padding: 0 0 4px;
    border-right: 1px solid #d9d9d9;
    border-bottom: 1px solid #d9d9d9;
    background-color: #fff;
    text-align: center;
}
th {
    border-right-color: #b5b5b5;
    border-bottom-color: #b5b5b5;
    background-color: #e6e6e6;
    font-weight: 300;
}
thead th {
    height: 43px;
    border-bottom-color: #9a9a9a;
}
tbody th {
    border-right-color: #9a9a9a;
}
.corner {
    width: 52px;
    padding: 2px 2px 0 0;
    text-align: right;
    line-height: 0;
}
.sel {
    background-color: #d2d2d2;
    color: #217346;
}
thead .sel {
    border-bottom: 2px solid #217346;
}
tbody .sel {
    border-right: 2px solid #217346;
}
.box {
    border-color: #333;
}
.head {
    background-color: #fff0cf;
}
.current {
    position: relative;
    padding-right: 5px;
    text-align: right;
}
.current::before {
    content: "";
    position: absolute;
    inset: -2px -1px -1px -2px;
    border: 2px solid #217346;
}
.current::after {
    content: "";
    position: absolute;
    right: -2px;
    bottom: -2px;
    width: 6px;
    height: 6px;
    border: 1px solid #fff;
    border-width: 1px 0 0 1px;
    background-color: #217346;
}
.vscroll {
    display: flex;
    flex-direction: column;
    width: 20px;
    padding: 2px 2px 0;
    background-color: #f0f0f0;
}
.vscroll button, .hscroll button {
    width: 16px;
    height: 16px;
    border: 1px solid #aaa;
    background-color: #fff;
}
.thumb {
    border: 1px solid #aaa;
    background-color: #fff;
}
.vscroll .thumb {
    height: 37%;
}
.vscroll .end {
    margin-top: auto;
}

/* sheet tabs */
.tabs {
    display: flex;
    align-items: center;
    height: 26px;
    padding-right: 20px;
    border-bottom: 1px solid #d0d0d0;
}
.arrows {
    display: flex;
    gap: 20px;
    width: 90px;
    padding-left: 24px;
}
.tab {
    align-self: flex-start;
    width: 70px;
    height: 23px;
    border-left: 1px solid #aaa;
    font-size: 15px;
    color: #555;
}
.tab.active {
    width: 72px;
    height: 24px;
    margin-top: -1px;
    border-bottom: 2px solid #217346;
    background-color: #fff;
    color: #217346;
}
.add {
    width: 78px;
    height: 20px;
    border-left: 1px solid #aaa;
}
.tabs .grip {
    margin: 0 13px 0 12px;
}
.hscroll {
    display: flex;
    flex: 1;
    background-color: #f0f0f0;
}
.hscroll .thumb {
    width: 83%;
}
.hscroll .end {
    margin-left: auto;
}

/* status bar */
.status {
    display: flex;
    align-items: center;
    height: 22px;
    padding-left: 12px;
    background-color: #f3f3f3;
}
.macro {
    margin: 0 18px 0 20px;
}
.display {
    margin-left: auto;
    margin-right: 20px;
}
.views {
    display: flex;
}
.views button {
    width: 39px;
    height: 22px;
}
.zoom {
    display: flex;
    align-items: center;
    gap: 5px;
    margin-left: 6px;
    font-size: 14px;
}
.zoom input {
    width: 100px;
    height: 12px;
    background: linear-gradient(#555, #555) center / 100% 1px no-repeat;
    appearance: none;
}
.zoom input::-webkit-slider-thumb {
    width: 5px;
    height: 11px;
    background-color: #333;
    appearance: none;
}
.percent {
    margin: 0 21px 0 12px;
    font-size: 13px;
}
```
